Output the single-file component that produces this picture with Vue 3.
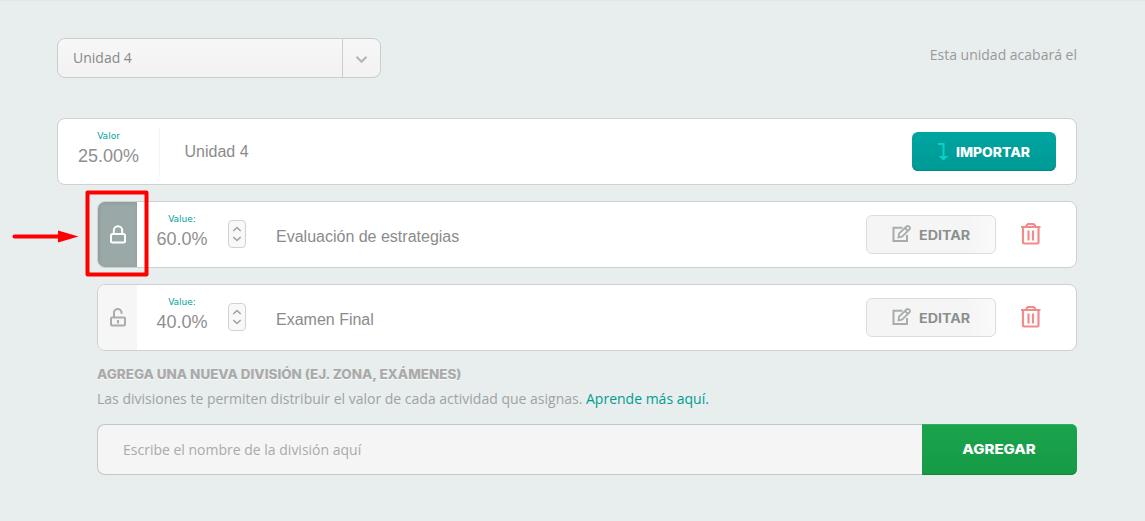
<template>
  <main class="page">
    <!-- Unit selector -->
    <header class="toolbar">
      <button class="unit-select">
        <span class="unit-name">{{ unit.name }}</span>
        <span class="unit-toggle">
          <svg width="14" height="10" viewBox="0 0 14 10">
            <path d="M1.500 1.800 6.500 6.800l5-5" fill="none" stroke="#b4b5b5" stroke-width="2.200" />
          </svg>
        </span>
      </button>
      <span class="unit-end">Esta unidad acabará el</span>
    </header>

    <!-- Unit summary -->
    <section class="card unit-card">
      <div class="unit-value">
        <span class="value-label">Valor</span>
        <span class="value-number">{{ unit.value }}</span>
      </div>
      <span class="unit-title">{{ unit.name }}</span>
      <button class="btn btn-import">
        <svg width="12" height="20" viewBox="0 0 12 20">
          <path d="M1 2h5.500v13" fill="none" stroke="#0bd0c8" stroke-width="2" />
          <path d="M1.500 14h10l-5 4.500z" fill="#0bd0c8" />
        </svg>
        <span class="wide">IMPORTAR</span>
      </button>
    </section>

    <!-- Divisions -->
    <section v-for="division in divisions" :key="division.name" class="card division">
      <button class="lock" :class="{ locked: division.locked }" @click="division.locked = !division.locked">
        <svg v-if="division.locked" width="18" height="20" viewBox="0 0 18 20">
          <rect x="2" y="9" width="14" height="8.500" rx="1.500" />
          <path d="M4.800 9V5.500a4.200 4.200 0 0 1 8.400 0V9" />
        </svg>
        <svg v-else width="18" height="20" viewBox="0 0 18 20">
          <rect x="2" y="9.500" width="14" height="8" rx="1" />
          <path d="M5 9.500V5.500a3.800 3.800 0 0 1 7.500-1.300v1.600M9 12v3.500" />
        </svg>
      </button>
      <div class="division-value">
        <span class="value-label">Value:</span>
        <span class="value-number">{{ division.value }}</span>
      </div>
      <div class="stepper">
        <svg width="16" height="26" viewBox="0 0 16 26">
          <path d="m4.300 10 3.700-3.500 3.700 3.500M4.300 16l3.700 3.500 3.700-3.500" fill="none" stroke="#a0a0a0" stroke-width="1.500" />
        </svg>
      </div>
      <span class="division-name">{{ division.name }}</span>
      <button class="btn btn-edit">
        <svg width="20" height="18" viewBox="0 0 20 18">
          <path d="M10.500 2.800H1.500v13.200h13.500V10" />
          <path class="thin" d="m7 8.700 7.500-7.200q1.300-1.100 2.700.100 1.500 1.400.300 2.700L10 11.700 6.500 12.300zM13 3l3 3" />
        </svg>
        <span class="wide">EDITAR</span>
      </button>
      <button class="delete">
        <svg width="22" height="24" viewBox="0 0 22 24">
          <path d="M1 5h19.500M6.500 5V3.500L8 2h5.500L15 3.500V5M3 5v15.500q0 1 1 1h13.500q1 0 1-1V5" />
          <path d="M8.500 8.500v10M13 8.500v10" />
        </svg>
      </button>
    </section>

    <!-- New division -->
    <section class="new-division">
      <h3><span class="wide heading-text">AGREGA UNA NUEVA DIVISIÓN (EJ. ZONA, EXÁMENES)</span></h3>
      <p>Las divisiones te permiten distribuir el valor de cada actividad que asignas. <a href="#">Aprende más aquí.</a></p>
      <form class="add-form" @submit.prevent="addDivision">
        <input v-model="newName" type="text" placeholder="Escribe el nombre de la división aquí">
        <button class="btn-add"><span class="wide add-text">AGREGAR</span></button>
      </form>
    </section>

    <!-- Callout over the first lock -->
    <svg class="callout" width="160" height="100" viewBox="0 0 160 100">
      <rect x="87.500" y="8.500" width="59" height="82" fill="none" stroke="#fe0000" stroke-width="4" stroke-linejoin="round" />
      <path d="M14.500 52.500H60" stroke="#fe0000" stroke-width="4" stroke-linecap="round" />
      <path d="m58 46.500 20.500 6-20.500 6z" fill="#fe0000" />
    </svg>
  </main>
</template>

<script setup>
import { ref } from 'vue'

const unit = { name: 'Unidad 4', value: '25.00%' }
const newName = ref('')

const divisions = ref([
  { name: 'Evaluación de estrategias', value: '60.0%', locked: true },
  { name: 'Examen Final', value: '40.0%', locked: false }
])

// Add an empty division with the typed name
const addDivision = () => {
  if (!newName.value.trim()) return
  divisions.value.push({ name: newName.value, value: '0.0%', locked: false })
  newName.value = ''
}
</script>

<style>
body {
  margin: 0;
  background: #e8eeee;
}
</style>

<style scoped>
.page {
  position: relative;
  box-sizing: border-box;
  width: 1145px;
  height: 521px;
  padding: 37px 68px 0 57px;
  overflow: hidden;
  background: #e8eeee;
  border-top: 1px solid #e1e7e7;
  font-family: "Open Sans", sans-serif;
  font-size: 14px;
  color: #999;
}

.page * {
  box-sizing: border-box;
}

button {
  padding: 0;
  font-family: inherit;
  cursor: pointer;
}

svg {
  display: block;
  flex: none;
}

.toolbar {
  display: flex;
  justify-content: space-between;
  height: 80px;
}

.unit-select {
  display: flex;
  width: 324px;
  height: 40px;
  border: 1px solid #cbcdcd;
  border-radius: 8px;
  background: linear-gradient(#f7f7f7, #f2f2f2);
  color: #888;
  font-size: 14px;
  text-align: left;
}

.unit-name {
  flex: 1;
  padding-left: 15px;
  line-height: 38px;
}

.unit-toggle {
  display: flex;
  align-items: center;
  justify-content: center;
  width: 38px;
  height: 38px;
  padding-top: 3px;
  border-left: 1px solid #cbcdcd;
}

.unit-end {
  line-height: 34px;
}

.card {
  display: flex;
  align-items: center;
  height: 67px;
  margin-bottom: 16px;
  background: #fff;
  border: 1px solid #cfd1d1;
  border-radius: 8px;
}

.unit-value,
.division-value {
  display: flex;
  flex-direction: column;
  align-items: center;
  padding-top: 2px;
  font-family: "Liberation Sans", sans-serif;
}

.unit-value {
  width: 102px;
  height: 47px;
  border-right: 1px solid #f3f3f3;
}

.value-label {
  font-family: "DejaVu Sans", sans-serif;
  font-size: 9px;
  line-height: 12px;
  color: #00a19c;
}

.value-number {
  margin-top: 4px;
  font-size: 18px;
  line-height: 20px;
  color: #8f8f8f;
}

.unit-title,
.division-name {
  font-family: "Liberation Sans", sans-serif;
  font-size: 16px;
  color: #8b8b8b;
}

.unit-title {
  flex: 1;
  padding-left: 24.5px;
}

.btn {
  display: flex;
  align-items: center;
  border-radius: 6px;
  font-size: 12.5px;
}

/* Wide caps for headings and button labels */
.wide {
  display: inline-block;
  font-family: Inter, sans-serif;
  font-weight: 800;
  transform: scaleX(1.11);
  transform-origin: left;
}

.btn .wide {
  padding-top: 1px;
}

.btn-import {
  width: 144px;
  height: 39px;
  margin-right: 20px;
  padding-left: 25px;
  gap: 7px;
  border: 0;
  background: linear-gradient(#00a5a0, #009a95);
  box-shadow: inset 0 -1px #008b87;
  color: #fff;
}

.division {
  margin-left: 40px;
  overflow: hidden;
}

.division-value {
  width: 91px;
  height: 47px;
  padding-right: 1px;
}

.lock {
  display: flex;
  align-items: center;
  justify-content: center;
  width: 39px;
  height: 65px;
  padding-top: 1px;
  border: 0;
  background: #f6f6f6;
}

.lock.locked {
  background: #9aa9a8;
  box-shadow: inset 1px 1px 4px #8c9a98;
}

.lock svg {
  fill: none;
  stroke: #aaabab;
  stroke-width: 2;
}

.lock.locked svg {
  stroke: #fff;
}

.stepper {
  width: 18px;
  height: 28px;
  margin-bottom: 2px;
  border: 1px solid #d2d2d2;
  border-radius: 4px;
  background: #f8f8f8;
}

.division-name {
  flex: 1;
  padding: 4px 0 0 30px;
}

.btn-edit {
  width: 130px;
  height: 39px;
  padding-left: 25px;
  gap: 7px;
  border: 1px solid #dcdcdc;
  background: linear-gradient(90deg, #f5f5f5 80%, #fafafa);
  color: #8b908f;
}

.btn-edit svg {
  margin-bottom: 2px;
  fill: none;
  stroke: #a8adac;
  stroke-width: 2;
}

.btn-edit .wide {
  font-weight: 700;
  transform: scaleX(1.14);
}

.btn-edit .thin {
  stroke-width: 1.8;
}

.delete {
  margin: 0 34px 2px 24px;
  border: 0;
  background: none;
}

.delete svg {
  fill: none;
  stroke: #f28b8b;
  stroke-width: 2.2;
}

.new-division {
  margin-left: 40px;
}

h3 {
  height: 14px;
  margin: 0;
  padding-top: 1px;
  font-size: 12.5px;
  line-height: 14px;
  color: #aaa;
  text-shadow: 0 1px #f8fafa;
}

.heading-text {
  transform: scaleX(1.074);
}

p {
  margin: 8px 0 15px;
  line-height: 20px;
  color: #a0a2a2;
}

a {
  color: #009b93;
  text-decoration: none;
}

.add-form {
  display: flex;
  height: 51px;
}

input {
  flex: 1;
  min-width: 0;
  padding: 0 25px;
  border: 1px solid #c2c8c7;
  border-right: 0;
  border-radius: 8px 0 0 8px;
  background: #f5f5f5;
  font: 14px "Open Sans", sans-serif;
}

input::placeholder {
  color: #aaa;
}

.btn-add {
  width: 155px;
  padding-bottom: 2px;
  border: 0;
  border-radius: 0 6px 6px 0;
  background: linear-gradient(#1ba44d, #169a45);
  box-shadow: inset 0 1px #20b75a, inset 0 -1px #12893b;
  color: #fff;
  font-size: 13.5px;
}

.add-text {
  transform-origin: center;
}

.callout {
  position: absolute;
  top: 183px;
  left: 0;
  pointer-events: none;
}
</style>
